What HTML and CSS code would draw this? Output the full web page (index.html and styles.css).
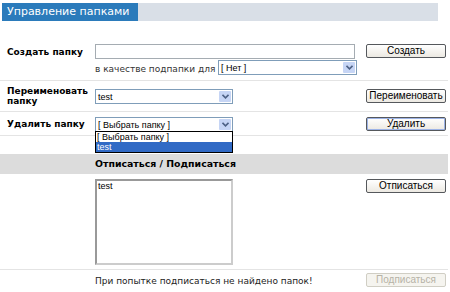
FILE: index.html
```html
<!DOCTYPE html>
<html lang="ru">
    <head>
        <meta charset="utf-8">
        <link rel="stylesheet" href="styles.css">
        <title>Управление папками</title>
    </head>
    <body>
        <div class="page">
            <div class="titlebar"><span class="title-tab">Управление папками</span></div>

            <div class="row row-create">
                <div class="label">Создать папку</div>
                <div class="controls">
                    <div class="textbox"></div>
                    <div class="subline">
                        <span class="note">в качестве подпапки для</span>
                        <div class="select select-parent"><span class="select-text">[ Нет ]</span><span class="arrow"><svg width="7" height="5" viewBox="0 0 7 5"><path d="M0.5 0.8 L3.5 3.8 L6.5 0.8" fill="none" stroke="#4d6185" stroke-width="1.6"/></svg></span></div>
                    </div>
                </div>
                <div class="action"><button class="btn">Создать</button></div>
            </div>

            <div class="row row-rename">
                <div class="label">Переименовать папку</div>
                <div class="controls">
                    <div class="select"><span class="select-text">test</span><span class="arrow"><svg width="7" height="5" viewBox="0 0 7 5"><path d="M0.5 0.8 L3.5 3.8 L6.5 0.8" fill="none" stroke="#4d6185" stroke-width="1.6"/></svg></span></div>
                </div>
                <div class="action"><button class="btn">Переименовать</button></div>
            </div>

            <div class="row row-delete">
                <div class="label">Удалить папку</div>
                <div class="controls">
                    <div class="select select-open"><span class="select-text">[ Выбрать папку ]</span><span class="arrow"><svg width="7" height="5" viewBox="0 0 7 5"><path d="M0.5 0.8 L3.5 3.8 L6.5 0.8" fill="none" stroke="#4d6185" stroke-width="1.6"/></svg></span>
                        <div class="dropdown">
                            <div class="option">[ Выбрать папку ]</div>
                            <div class="option option-active">test</div>
                        </div>
                    </div>
                </div>
                <div class="action"><button class="btn btn-focus">Удалить</button></div>
            </div>

            <div class="section-head">
                <div class="section-title">Отписаться / Подписаться</div>
            </div>

            <div class="row row-list">
                <div class="label"></div>
                <div class="controls">
                    <div class="listbox"><div class="list-item">test</div></div>
                </div>
                <div class="action"><button class="btn">Отписаться</button></div>
            </div>

            <div class="row row-last">
                <div class="label"></div>
                <div class="controls"><span class="message">При попытке подписаться не найдено папок!</span></div>
                <div class="action"><button class="btn btn-disabled" disabled>Подписаться</button></div>
            </div>
        </div>
    </body>
</html>
```

FILE: styles.css
```css
body {
  margin: 0;
  background-color: white;
  color: #000;
  font-family: "DejaVu Sans", Verdana, sans-serif;
  font-size: 9px;
}
.page {
  width: 448px;
  padding-top: 3px;
}
.titlebar {
  display: flex;
  background-color: #d9dfe7;
  width: 436px;
  margin-left: 2px;
  height: 18px;
}
.title-tab {
  background-color: #2b7bbb;
  color: white;
  height: 18px;
  line-height: 18px;
  padding: 0 9px 0 5px;
  font-size: 11px;
}
.row {
  display: grid;
  grid-template-columns: 88px 271px 80px;
  padding-left: 7px;
  border-bottom: 1px solid #e4e4e4;
}
.row-create {
  margin-top: 23px;
  padding-bottom: 5px;
}
.row-rename {
  padding-top: 5px;
  padding-bottom: 5px;
}
.row-rename .controls,
.row-rename .action {
  padding-top: 3px;
}
.row-delete {
  padding-top: 5px;
  padding-bottom: 3px;
}
.row-list {
  padding-top: 5px;
  padding-bottom: 4px;
}
.row-last {
  border-bottom: none;
  padding-top: 3px;
}
.label {
  font-weight: bold;
  line-height: 10px;
  padding-top: 2px;
}
.row-create .label {
  padding-top: 3px;
}
.row-rename .label {
  padding-top: 0;
  padding-right: 6px;
}
.textbox {
  width: 258px;
  height: 13px;
  border: 1px solid #a5acb2;
}
.subline {
  display: flex;
  align-items: center;
  margin-top: 1px;
}
.note {
  color: #333;
  padding-top: 2px;
  width: 123px;
}
.select {
  position: relative;
  display: flex;
  align-items: center;
  justify-content: space-between;
  width: 136px;
  height: 13px;
  border: 1px solid #7f9db9;
  font-family: "Liberation Sans", Arial, sans-serif;
  font-size: 9px;
}
.select-parent {
  width: 137px;
}
.select-text {
  padding-left: 2px;
}
.arrow {
  display: flex;
  align-items: center;
  justify-content: center;
  width: 12px;
  height: 11px;
  margin-right: 1px;
  background-color: #c6d5f5;
  border-radius: 1px;
}
.dropdown {
  position: absolute;
  left: -1px;
  top: 13px;
  width: 136px;
  border: 1px solid #000;
  background-color: white;
}
.option {
  height: 10px;
  line-height: 10px;
  padding-left: 1px;
}
.option-active {
  background-color: #316ac5;
  color: white;
}
.listbox {
  width: 134px;
  height: 82px;
  border: 2px solid #999;
  border-right-color: #ccc;
  border-bottom-color: #ccc;
  font-family: "Liberation Sans", Arial, sans-serif;
  font-size: 9px;
}
.list-item {
  padding-left: 1px;
  line-height: 11px;
}
.btn {
  display: block;
  width: 80px;
  height: 14px;
  padding: 0;
  border: 1px solid #55585c;
  border-radius: 2px;
  background: linear-gradient(#ffffff, #ece9e2);
  font-family: "Liberation Sans", Arial, sans-serif;
  font-size: 10px;
  line-height: 12px;
  color: #000;
}
.btn-focus {
  box-shadow: inset 0 0 0 1px #9db3e6;
}
.btn-disabled {
  border-color: #d0cec4;
  background: #f5f4ef;
  color: #b5b2a6;
}
.section-head {
  margin-top: 18px;
  background-color: #dcdcdc;
  height: 20px;
  padding-left: 95px;
}
.section-title {
  font-weight: bold;
  font-size: 9.4px;
  line-height: 20px;
}
.message {
  display: inline-block;
  padding-top: 3px;
  color: #222;
}
```
